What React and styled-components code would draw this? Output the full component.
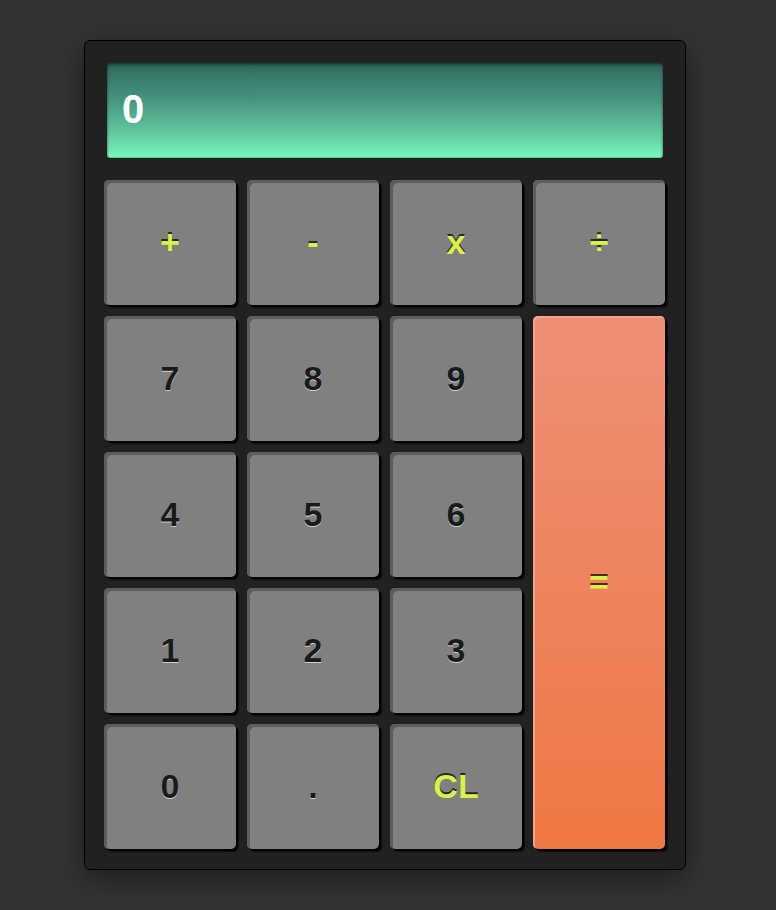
import React, { useState } from "react";
import styled, { createGlobalStyle, css } from "styled-components";

const GlobalStyle = createGlobalStyle`
  html, body {
    margin: 0;
    padding: 0;
    background: #333333;
    font-family: "Liberation Sans", Arial, sans-serif;
  }
`;

const keys = [
  { label: "+", kind: "op" },
  { label: "-", kind: "op" },
  { label: "x", kind: "op" },
  { label: "÷", kind: "op" },
  { label: "7" },
  { label: "8" },
  { label: "9" },
  { label: "=", kind: "equals" },
  { label: "4" },
  { label: "5" },
  { label: "6" },
  { label: "1" },
  { label: "2" },
  { label: "3" },
  { label: "0" },
  { label: "." },
  { label: "CL", kind: "op" },
];

const App = () => {
  const [display, setDisplay] = useState("0");

  const press = (label) => {
    if (label === "CL") return setDisplay("0");
    if (label === "=") {
      try {
        const expr = display.replace(/x/g, "*").replace(/÷/g, "/");
        // eslint-disable-next-line no-new-func
        setDisplay(String(Function(`return (${expr})`)()));
      } catch (e) {
        setDisplay("0");
      }
      return;
    }
    setDisplay(display === "0" && label !== "." ? label : display + label);
  };

  return (
    <Page>
      <GlobalStyle />
      <Calculator>
        <Screen>{display}</Screen>
        <Keypad>
          {keys.map((k) => (
            <Key key={k.label} kind={k.kind} onClick={() => press(k.label)}>
              {k.label}
            </Key>
          ))}
        </Keypad>
      </Calculator>
    </Page>
  );
};

const Page = styled.div`
  min-height: 910px;
  padding: 40px 0 0 84px;
  box-sizing: border-box;
`;

const Calculator = styled.div`
  width: 602px;
  box-sizing: border-box;
  background: #212121;
  border: 1px solid #000;
  border-radius: 6px;
  padding: 20px 20px 20px 19px;
  box-shadow: 0 8px 30px rgba(0, 0, 0, 0.45);
`;

const Screen = styled.div`
  margin: 0 2px 0 3px;
  height: 97px;
  box-sizing: border-box;
  border-radius: 3px;
  background: linear-gradient(
    to bottom,
    #2b5a4a 0%,
    #357568 12%,
    #469480 40%,
    #60c59c 72%,
    #77f9bb 100%
  );
  box-shadow: inset 0 3px 3px rgba(0, 0, 0, 0.6), inset 0 -1px 0 rgba(0, 0, 0, 0.2);
  color: #fff;
  font-weight: bold;
  font-size: 40px;
  padding-left: 15px;
  display: flex;
  align-items: center;
`;

const Keypad = styled.div`
  margin-top: 22px;
  display: grid;
  grid-template-columns: repeat(4, 1fr);
  grid-auto-rows: 125px;
  gap: 11px;
`;

const Key = styled.button`
  font-family: "Liberation Sans", Arial, sans-serif;
  font-weight: bold;
  font-size: 34px;
  border: none;
  border-radius: 5px;
  background: #808080;
  color: #161c1c;
  text-shadow: 0 1px 0 #d0d0d0;
  box-shadow: inset 3px 3px 0 #5d5d5d, 2px 2px 0 #000, 3px 3px 1px rgba(0, 0, 0, 0.6);
  cursor: pointer;
  padding: 0;

  ${(props) =>
    props.kind === "op" &&
    css`
      color: #dcf048;
      text-shadow: 0 -2px 0 #262626;
    `}

  ${(props) =>
    props.kind === "equals" &&
    css`
      grid-column: 4;
      grid-row: 2 / span 4;
      color: #dcf048;
      text-shadow: 0 -2px 0 #4a2a20;
      background: linear-gradient(to bottom, #ef8f77, #ee7843);
      box-shadow: inset 2px 2px 0 #f3a58c, 2px 2px 0 #000, 3px 3px 1px rgba(0, 0, 0, 0.6);
    `}
`;

export default App;
